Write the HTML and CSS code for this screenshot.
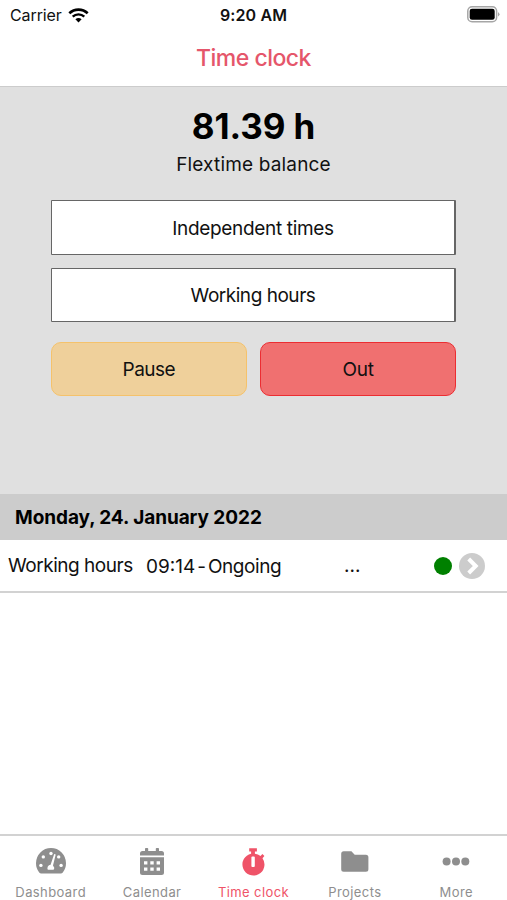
FILE: index.html
```html
<!DOCTYPE html>
<html lang="en">
<head>
<meta charset="utf-8">
<title>Time clock</title>
<link rel="stylesheet" href="styles.css">
</head>
<body>
<div class="app">
  <div class="status">
    <div class="carrier"><span>Carrier</span>
      <svg width="21" height="15" viewBox="0 0 21 15"><path d="M1.3 5.3a13.3 13.3 0 0 1 18.4 0" fill="none" stroke="#000" stroke-width="2.6"/><path d="M4.7 8.7a8.5 8.5 0 0 1 11.6 0" fill="none" stroke="#000" stroke-width="2.4"/><path d="M7.4 11.3a4.7 4.7 0 0 1 6.2 0L10.5 14.5Z"/></svg>
    </div>
    <div class="clock">9:20 AM</div>
    <svg class="battery" width="33" height="17" viewBox="0 0 33 17"><rect x=".8" y=".8" width="28.8" height="15" rx="4.3" fill="#fff" stroke="#a6a6a6" stroke-width="1.5"/><rect x="2.7" y="2.8" width="25" height="11" rx="2.3"/><path d="M31 6q3 2.3 0 4.6Z" fill="#a6a6a6"/></svg>
  </div>
  <header class="title"><h1>Time clock</h1></header>
  <main class="panel">
    <div class="balance">81.39 h</div>
    <div class="caption">Flextime balance</div>
    <div class="controls">
      <button class="box independent">Independent times</button>
      <button class="box working">Working hours</button>
      <div class="actions">
        <button class="action pause">Pause</button>
        <button class="action out">Out</button>
      </div>
    </div>
  </main>
  <h2 class="date"><span>Monday, 24. January 2022</span></h2>
  <div class="entry">
    <span class="kind">Working hours</span>
    <span class="period"><span>09:14</span><span>-</span><span class="end">Ongoing</span></span>
    <span class="note">...</span>
    <span class="dot"></span>
    <svg width="26" height="26" viewBox="0 0 26 26"><circle cx="13" cy="13" r="13" fill="#ccc"/><path d="M9.700 6l7 7-7 7" fill="none" stroke="#fff" stroke-width="4"/></svg>
  </div>
  <div class="space"></div>
  <nav class="tabs">
    <a class="tab"><svg width="32" height="30" viewBox="0 0 32 30"><path fill="#8e8e8e" d="M4.200 26.500Q1 22.500 1 17.300a15 15.300 0 0 1 30 0q0 5.200-3.200 9.200-.8 1-2 1H6.200q-1.200 0-2-1Z"/><g fill="#fff"><circle cx="5.900" cy="19.400" r="1.700"/><circle cx="8.300" cy="10.900" r="1.700"/><circle cx="16" cy="7.500" r="1.700"/><circle cx="23.700" cy="10.900" r="1.700"/><circle cx="26.100" cy="19.400" r="1.700"/><path d="M19.200 8l1.500.5-2.700 11a3.600 3.600 0 0 1 .6 4.300h-5.800a3.400 3.400 0 0 1 2.800-5Z"/></g></svg><span>Dashboard</span></a>
    <a class="tab"><svg width="32" height="30" viewBox="0 0 32 30"><path fill="#8e8e8e" fill-rule="evenodd" d="M4 9.500V7.500Q4 5 6.500 5H9V2.800q0-.8.800-.8h1.600q.8 0 .8.800V5h7.600V2.800q0-.8.800-.8h1.600q.8 0 .8.800V5h2.500Q28 5 28 7.500v2ZM4 11.200h24v15.300q0 2.500-2.500 2.500h-19Q4 29 4 26.500Zm4 4v3.200h3.400v-3.200Zm6.300 0v3.200h3.400v-3.200Zm6.300 0v3.200H24v-3.200ZM8 21.500v3.200h3.400v-3.200Zm6.300 0v3.200h3.400v-3.200Zm6.300 0v3.200H24v-3.200Z"/></svg><span>Calendar</span></a>
    <a class="tab active"><svg width="32" height="30" viewBox="0 0 32 30"><path fill="#ef5368" fill-rule="evenodd" d="M12.200 2.200h7.700v3.300h-2v2.200q3.200.6 5.600 2.300l1.900-2 2 2-1.900 2.200a11 11 0 1 1-11.400-4.500V5.500h-1.900Zm2.200 9.100v8.800q0 .9.900.9h1.600q.9 0 .9-.9v-8.800q0-.8-.9-.8h-1.600q-.9 0-.9.800Z"/></svg><span>Time clock</span></a>
    <a class="tab"><svg width="32" height="30" viewBox="0 0 32 30"><path fill="#8e8e8e" d="M2.200 7.800q0-2.500 2.500-2.500h7.700L15.700 8.700h11.200q2.500 0 2.500 2.500v12q0 2.500-2.500 2.500H4.700q-2.500 0-2.500-2.500Z"/></svg><span>Projects</span></a>
    <a class="tab"><svg width="32" height="30" viewBox="0 0 32 30"><g fill="#8e8e8e"><circle cx="6.600" cy="15.500" r="4"/><circle cx="16" cy="15.500" r="4"/><circle cx="25.300" cy="15.500" r="4"/></g></svg><span>More</span></a>
  </nav>
</div>
</body>
</html>
```
FILE: styles.css
```css
* { box-sizing: border-box; }
body { margin: 0; font-family: Inter, "Liberation Sans", sans-serif; color: #111; background: #fff; }
h1, h2 { margin: 0; }
button { font: inherit; color: inherit; padding: 0; }
span { white-space: nowrap; }
.app { width: 507px; height: 900px; display: flex; flex-direction: column; overflow: hidden; }
.status { height: 30px; display: grid; grid-template-columns: 1fr auto 1fr; align-items: center; padding: 0 7px 0 10px; }
.carrier { display: flex; align-items: center; gap: 6px; font-size: 16px; letter-spacing: -.1px; }
.clock { font-size: 16px; font-weight: 600; letter-spacing: .1px; margin-right: 3px; }
.battery { justify-self: end; margin-top: -2px; }
.title { height: 57px; border-bottom: 1px solid #ccc; display: flex; align-items: center; justify-content: center; }
.title h1 { font-size: 23px; font-weight: 500; color: #e5566b; line-height: 28px; letter-spacing: -.5px; }
.panel { height: 407px; background: #e0e0e0; display: flex; flex-direction: column; align-items: center; padding-top: 17px; }
.balance { font-size: 35px; font-weight: 700; line-height: 44px; color: #000; letter-spacing: -.1px; }
.caption { font-size: 19px; line-height: 28px; margin-top: 3px; letter-spacing: .17px; }
.controls { width: 405.5px; margin-top: 21px; display: flex; flex-direction: column; gap: 13px; }
.box { height: 54px; background: #fff; border: 1px solid #666; border-right-width: 2px; border-radius: 1px; font-size: 19px; }
.independent { height: 55px; letter-spacing: -.32px; padding-top: 1px; }
.working { letter-spacing: -.47px; }
.actions { display: flex; gap: 13px; margin-top: 7px; }
.action { flex: 1; height: 54px; border-radius: 10px; font-size: 19px; }
.pause { background: #efd09b; border: 1.500px solid #f5c26b; letter-spacing: -.5px; }
.out { background: #f07070; border: 1.500px solid #ec2d32; letter-spacing: -.2px; }
.date { height: 46px; background: #ccc; font-size: 19px; font-weight: 700; line-height: 47px; padding-left: 15px; color: #000; letter-spacing: -.07px; }
.entry { height: 53px; border-bottom: 2px solid #d2d2d2; display: flex; align-items: center; padding-left: 8px; font-size: 19px; }
.kind { width: 138px; letter-spacing: -.47px; }
.period { width: 198px; display: flex; gap: 2px; padding-top: 1px; }
.end { letter-spacing: -.45px; }
.note { width: 90px; }
.dot { width: 18px; height: 18px; border-radius: 50%; background: #008000; margin-right: 7px; }
.space { flex: 1; }
.tabs { height: 66px; border-top: 2px solid #d2d2d2; display: grid; grid-template-columns: repeat(5, 1fr); }
.tab { display: flex; flex-direction: column; align-items: center; padding-top: 10px; font-size: 13px; letter-spacing: .4px; color: #8e8e8e; }
.tab span { line-height: 18px; margin-top: 7px; }
.active { color: #ef5368; }
```
